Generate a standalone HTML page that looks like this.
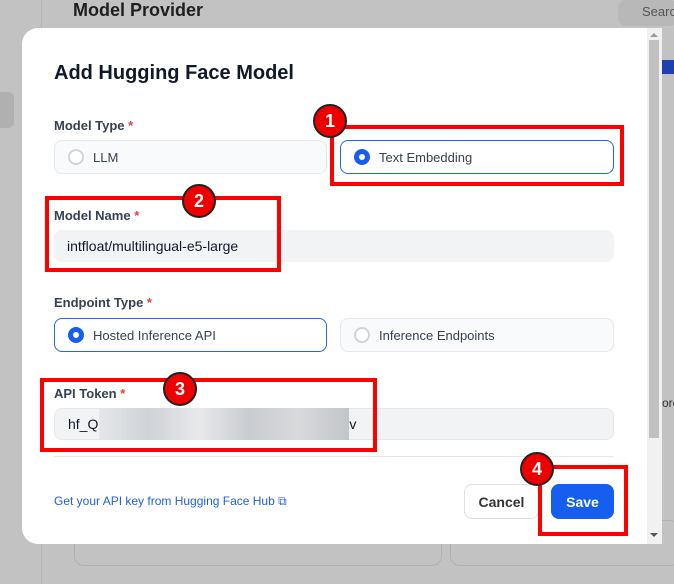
<!DOCTYPE html>
<html style="width:674px;height:584px;overflow:hidden"><head><style>
*{box-sizing:border-box;margin:0;padding:0}
body{width:674px;height:584px;overflow:hidden;background:#c2c2c2;font-family:"Liberation Sans",sans-serif;position:relative}
.a{position:absolute}
.lbl{font-size:13px;font-weight:bold;color:#374151}
.lbl span{color:#e53e3e}
.opt{border:1px solid #e5e7eb;border-radius:8px;background:#f9fafb;font-size:13px;color:#374151;display:flex;align-items:center;padding-left:13px}
.opt.on{border-color:#2563eb;background:#fff}
.r{width:16px;height:16px;border-radius:50%;border:2px solid #d1d5db;margin-right:9px;background:#fff}
.on .r{border:5px solid #155eef}
.inp{background:#f2f3f5;border-radius:8px;font-size:14px;color:#111827;padding-left:13px;display:flex;align-items:center}
.box{border:4px solid #f00}
.c{width:34px;height:34px;border-radius:50%;background:#e00;border:2px solid #222;color:#fff;font-weight:bold;font-size:18px;display:flex;align-items:center;justify-content:center}
</style></head><body>
<div class="a" style="left:0;top:0;width:42px;height:584px;border-right:1px solid #b5b5b5"></div>
<div class="a" style="left:0;top:92px;width:14px;height:36px;background:#b0b0b0;border-radius:0 6px 6px 0"></div>
<div class="a" style="left:73px;top:0;font-size:18px;font-weight:bold;color:#1f1f1f">Model Provider</div>
<div class="a" style="left:618px;top:0;width:60px;height:26px;background:#b8b8b8;border-radius:8px;font-size:13px;color:#555;padding:4px 0 0 24px">Searc</div>
<div class="a" style="left:662px;top:60px;width:12px;height:14px;background:#1e40af"></div>
<div class="a" style="left:662px;top:396px;font-size:12px;color:#333">ore</div>
<div class="a" style="left:74px;top:520px;width:368px;height:46px;border:1px solid #b0b0b0;border-radius:10px"></div>
<div class="a" style="left:450px;top:520px;width:230px;height:46px;border:1px solid #b0b0b0;border-radius:10px"></div>

<div class="a" style="left:22px;top:28px;width:640px;height:516px;background:#fff;border-radius:16px 0 0 16px"></div>
<div class="a" style="left:647px;top:28px;width:15px;height:516px;background:#f1f1f1"></div>
<div class="a" style="left:649px;top:40px;width:10px;height:398px;background:#c1c1c1"></div>
<div class="a" style="left:650px;top:33px;width:0;height:0;border:4px solid transparent;border-bottom:4px solid #999;border-top:0"></div>
<div class="a" style="left:650px;top:533px;width:0;height:0;border:4px solid transparent;border-top:4px solid #555;border-bottom:0"></div>

<div class="a" style="left:54px;top:62px;font-size:20px;font-weight:bold;color:#111827">Add Hugging Face Model</div>
<div class="a lbl" style="left:54px;top:118px">Model Type <span>*</span></div>
<div class="a opt" style="left:54px;top:140px;width:273px;height:34px"><div class="r"></div>LLM</div>
<div class="a opt on" style="left:340px;top:140px;width:274px;height:34px"><div class="r"></div>Text Embedding</div>
<div class="a lbl" style="left:54px;top:208px">Model Name <span>*</span></div>
<div class="a inp" style="left:54px;top:230px;width:560px;height:32px">intfloat/multilingual-e5-large</div>
<div class="a lbl" style="left:54px;top:295px">Endpoint Type <span>*</span></div>
<div class="a opt on" style="left:54px;top:318px;width:273px;height:34px"><div class="r"></div>Hosted Inference API</div>
<div class="a opt" style="left:340px;top:318px;width:274px;height:34px"><div class="r"></div>Inference Endpoints</div>
<div class="a lbl" style="left:54px;top:386px">API Token <span>*</span></div>
<div class="a inp" style="left:54px;top:408px;width:560px;height:32px;border:1px solid #e5e7eb">hf_Q<span style="display:inline-block;width:250px;height:32px;background:linear-gradient(90deg,#e5e7ea,#cfd2d6,#e8e9eb,#c9ccd0,#d8d9db,#c2c5c9);margin-left:1px"></span>v</div>
<div class="a" style="left:54px;top:456px;width:560px;height:1px;background:#e5e7eb"></div>
<div class="a" style="left:54px;top:494px;font-size:12px;color:#1f5fe0">Get your API key from Hugging Face Hub ⧉</div>
<div class="a" style="left:464px;top:484px;width:75px;height:35px;border:1px solid #e0e0e0;border-radius:8px;font-size:14px;font-weight:bold;color:#333;display:flex;align-items:center;justify-content:center">Cancel</div>
<div class="a" style="left:551px;top:484px;width:63px;height:35px;background:#155eef;border-radius:8px;font-size:14px;font-weight:bold;color:#fff;display:flex;align-items:center;justify-content:center">Save</div>

<div class="a box" style="left:330px;top:125px;width:294px;height:61px"></div>
<div class="a box" style="left:45px;top:196px;width:236px;height:76px"></div>
<div class="a box" style="left:40px;top:378px;width:337px;height:74px"></div>
<div class="a box" style="left:538px;top:465px;width:90px;height:71px"></div>
<div class="a c" style="left:313px;top:104px">1</div>
<div class="a c" style="left:182px;top:184px">2</div>
<div class="a c" style="left:163px;top:372px">3</div>
<div class="a c" style="left:520px;top:452px">4</div>
</body></html>
